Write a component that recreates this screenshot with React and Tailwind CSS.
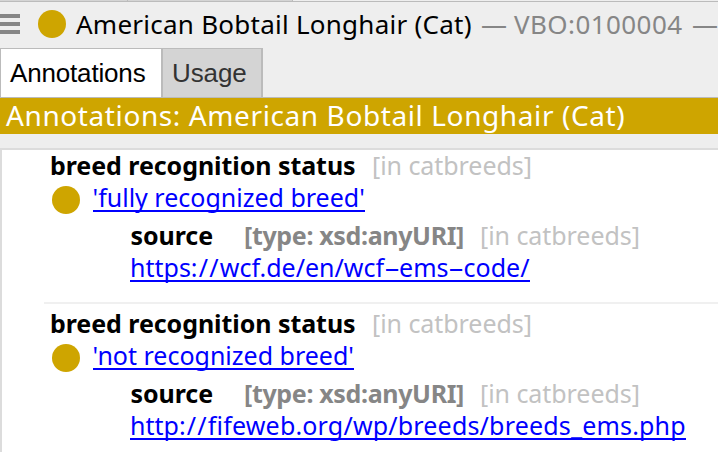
const ANNOTATIONS = [
  {
    value: "'fully recognized breed'",
    href: (
      <>
        <span>https</span>
        <span className="tracking-[1.2px]">://</span>
        <span>wcf.de/en/wcf</span>
        <Hyphen />
        <span>ems</span>
        <Hyphen />
        <span>code/</span>
      </>
    ),
    width: "w-[400px]",
  },
  {
    value: "'not recognized breed'",
    href: (
      <>
        <span>http</span>
        <span className="tracking-[1.2px]">://</span>
        <span className="tracking-[0.18px]">fifeweb.org/wp/breeds/breeds_ems.php</span>
      </>
    ),
    width: "w-[556px]",
  },
];

function Hyphen() {
  return <span className="inline-block w-[15px] text-center"><span className="inline-block scale-x-[2]">-</span></span>;
}

function Dot() {
  return <span className="block size-7 shrink-0 rounded-full bg-[#cea500]" />;
}

function Annotation({ value, href, width }) {
  return (
    <section className="whitespace-pre text-[25px] leading-[30px]">
      <div className="flex h-[30px] pl-[6px]">
        <span className="w-[322px] font-bold tracking-[-0.06px]">breed recognition status</span>
        <span className="tracking-[-0.06px] text-[#c2c2c2]">[in catbreeds]</span>
      </div>
      <div className="mt-0.5 flex h-[30px] items-start pl-2">
        <span className="mt-1 mr-[12.5px]"><Dot /></span>
        <a className="block h-[30px] border-b-2 border-[#0000ff] text-[#0000ff]">{value}</a>
      </div>
      <div className="mt-2 flex h-[30px] pl-[86.5px]">
        <span className="w-[113.5px] font-bold tracking-[-0.06px]">source</span>
        <span className="w-[236px] font-bold tracking-[-0.35px] text-[#868686]">[type: xsd:anyURI]</span>
        <span className="tracking-[-0.06px] text-[#c2c2c2]">[in catbreeds]</span>
      </div>
      <div className="mt-0.5 flex pl-[86px]">
        <a className={`block h-[30px] border-b-2 border-[#0000ff] text-[#0000ff] ${width}`}>{href}</a>
      </div>
    </section>
  );
}

export default function App() {
  return (
    <div className="flex h-[452px] w-[718px] flex-col overflow-hidden bg-[#eeeeee] font-['Noto_Sans','Open_Sans',sans-serif] text-black">
      <div className="flex h-0.5 shrink-0 border-b border-[#bbbbbb]">
        <div className="w-[128px] border-r border-[#bbbbbb] bg-[#d4d4d4]" />
        <div className="w-[165px] border-r border-[#bbbbbb] bg-[#d4d4d4]" />
      </div>

      <header className="flex h-[46px] shrink-0 items-start whitespace-pre pt-2 text-[26px] leading-[28px]">
        <div className="mt-1 flex w-[38px] flex-col gap-1">
          <div className="h-1 w-5 bg-[#868686]" />
          <div className="h-1 w-5 bg-[#868686]" />
          <div className="h-1 w-5 bg-[#868686]" />
        </div>
        <Dot />
        <span className="ml-[10px] w-[405px] shrink-0 tracking-[0.25px]">American Bobtail Longhair (Cat)</span>
        <span className="w-[33px] shrink-0 text-[#868686]">—</span>
        <span className="w-[178px] shrink-0 tracking-[0.42px] text-[#868686]">VBO:0100004</span>
        <span className="shrink-0 text-[#868686]">—</span>
      </header>

      <nav className="flex h-[50px] shrink-0 border-b border-[#bbbbbb] font-['Liberation_Sans',Arial,sans-serif] text-[26px] leading-[49px]">
        <div className="w-[163px] border-t border-r-2 border-l border-[#bbbbbb] bg-white pl-[9px] tracking-[-0.17px]">Annotations</div>
        <div className="w-[100px] border-t border-r-2 border-[#bbbbbb] bg-[#d4d4d4] pl-[9px] tracking-[-0.1px] text-[#333333]">Usage</div>
      </nav>

      <h1 className="h-9 shrink-0 whitespace-pre bg-[#cea500] pl-[6px] text-[28px] leading-[34px] tracking-[0.6px] text-white">
        Annotations: American Bobtail Longhair (Cat)
      </h1>

      <main className="mt-[14px] flex min-h-0 flex-1 flex-col border-t-2 border-l-2 border-[#dcdcdc] bg-white pl-[42px]">
        <Annotation {...ANNOTATIONS[0]} />
        <div className="mt-5 mb-1 h-0.5 shrink-0 bg-[#f0f0f0]" />
        <Annotation {...ANNOTATIONS[1]} />
      </main>
    </div>
  );
}
